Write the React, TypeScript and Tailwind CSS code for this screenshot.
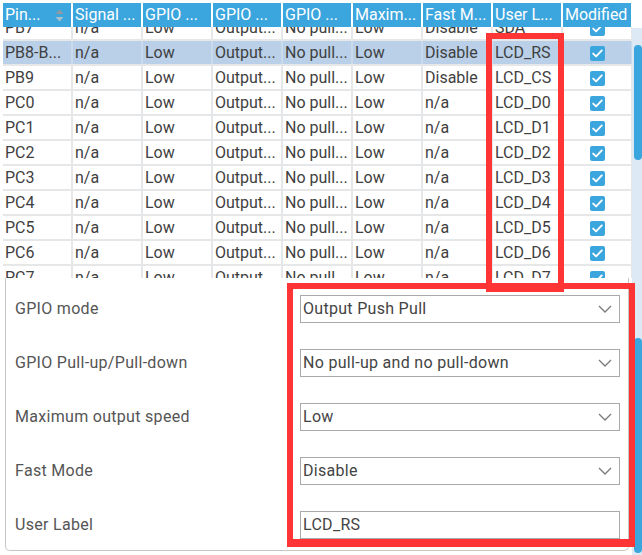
import React from "react";

type Row = {
  pin: string;
  fast: string;
  label: string;
  selected?: boolean;
};

const ROWS: Row[] = [
  { pin: "PB7", fast: "Disable", label: "SDA" },
  { pin: "PB8-B...", fast: "Disable", label: "LCD_RS", selected: true },
  { pin: "PB9", fast: "Disable", label: "LCD_CS" },
  { pin: "PC0", fast: "n/a", label: "LCD_D0" },
  { pin: "PC1", fast: "n/a", label: "LCD_D1" },
  { pin: "PC2", fast: "n/a", label: "LCD_D2" },
  { pin: "PC3", fast: "n/a", label: "LCD_D3" },
  { pin: "PC4", fast: "n/a", label: "LCD_D4" },
  { pin: "PC5", fast: "n/a", label: "LCD_D5" },
  { pin: "PC6", fast: "n/a", label: "LCD_D6" },
  { pin: "PC7", fast: "n/a", label: "LCD_D7" },
];

const HEADERS = [
  "Pin...",
  "Signal ...",
  "GPIO ...",
  "GPIO ...",
  "GPIO ...",
  "Maxim...",
  "Fast M...",
  "User L...",
  "Modified",
];

const FIELDS: { label: string; value: string; select: boolean }[] = [
  { label: "GPIO mode", value: "Output Push Pull", select: true },
  { label: "GPIO Pull-up/Pull-down", value: "No pull-up and no pull-down", select: true },
  { label: "Maximum output speed", value: "Low", select: true },
  { label: "Fast Mode", value: "Disable", select: true },
  { label: "User Label", value: "LCD_RS", select: false },
];

function SortIcon() {
  return (
    <svg width="9" height="13" viewBox="0 0 9 13" className="shrink-0">
      <path d="M4.5 0.5 L8.5 5 L0.5 5 Z" fill="#8f9ba1" />
      <path d="M0.5 8 L8.5 8 L4.5 12.5 Z" fill="#a9bfcb" />
    </svg>
  );
}

function Check() {
  return (
    <span className="flex h-[15px] w-[15px] items-center justify-center rounded-[2px] bg-[#3ba5de]">
      <svg width="11" height="9" viewBox="0 0 11 9">
        <path
          d="M1.2 4.6 L4.1 7.4 L9.8 1.4"
          fill="none"
          stroke="#ffffff"
          strokeWidth="1.9"
          strokeLinecap="round"
          strokeLinejoin="round"
        />
      </svg>
    </span>
  );
}

function Chevron() {
  return (
    <svg width="14" height="8" viewBox="0 0 14 8">
      <path d="M1 1 L7 7 L13 1" fill="none" stroke="#7a7a7a" strokeWidth="1.3" />
    </svg>
  );
}

function Cell({ children, center }: { children: React.ReactNode; center?: boolean }) {
  return (
    <div
      className={
        "flex h-[23px] items-center overflow-hidden whitespace-nowrap px-[2px] pt-[1px] text-[16px] text-[#3f3f3f] " +
        (center ? "justify-center" : "")
      }
    >
      {children}
    </div>
  );
}

export default function App() {
  return (
    <div className="relative h-[555px] w-[642px] overflow-hidden bg-white font-['Roboto',sans-serif]">
      {/* pin table */}
      <div className="flex h-[278px]">
        <div className="flex w-[632px] flex-col overflow-hidden pl-[3px] pt-[3px]">
          <div className="grid h-[24px] shrink-0 grid-cols-[repeat(9,68px)] gap-x-[2px]">
            {HEADERS.map((h, i) => (
              <div
                key={i}
                className="flex items-center justify-between overflow-hidden bg-[#3ba5de] px-[2px] text-[16px] whitespace-nowrap text-white"
              >
                <span>{h}</span>
                {i === 0 ? (
                  <span className="mr-[5px]">
                    <SortIcon />
                  </span>
                ) : null}
              </div>
            ))}
          </div>
          <div className="flex-1 overflow-hidden">
            <div className="-mt-[11px] flex flex-col gap-y-[2px] bg-[#e6e7e8]">
              {ROWS.map((r) => (
                <div
                  key={r.pin}
                  className={
                    "grid grid-cols-[repeat(9,68px)] gap-x-[2px] " +
                    (r.selected ? "bg-[#cbdbec] [&>div]:bg-[#b9d0e8]" : "[&>div]:bg-white")
                  }
                >
                  <Cell>{r.pin}</Cell>
                  <Cell>n/a</Cell>
                  <Cell>Low</Cell>
                  <Cell>Output...</Cell>
                  <Cell>No pull...</Cell>
                  <Cell>Low</Cell>
                  <Cell>{r.fast}</Cell>
                  <Cell>{r.label}</Cell>
                  <Cell center>
                    <Check />
                  </Cell>
                </div>
              ))}
            </div>
          </div>
        </div>
        <div className="w-[10px] pt-[28px]">
          <div className="h-full bg-[#dde9f5] pl-[2px] pt-[17px]">
            <div className="h-[115px] w-[8px] rounded-full bg-[#3ba5de]" />
          </div>
        </div>
      </div>

      {/* configuration panel */}
      <div className="flex h-[277px]">
        <div className="w-[632px]">
          <div className="ml-[5px] flex h-[273px] w-[624px] flex-col gap-[26px] rounded-b-[5px] border-x border-b border-[#c6c6c6] pl-[9px] pr-[8px] pt-[17px]">
            {FIELDS.map((f) => (
              <div key={f.label} className="flex h-[28px] items-center justify-between">
                <span className="text-[16px] tracking-[0.3px] text-[#555555]">{f.label}</span>
                <div className="flex h-[28px] w-[320px] items-center justify-between border border-[#a9a9a9] pl-[2px] pr-[7px] text-[16px] tracking-[0.3px] text-[#444444]">
                  <span>{f.value}</span>
                  {f.select ? <Chevron /> : null}
                </div>
              </div>
            ))}
          </div>
        </div>
        <div className="w-[10px] bg-[#dde9f5] pl-[2px] pt-[60px]">
          <div className="h-[215px] w-[8px] rounded-full bg-[#3ba5de]" />
        </div>
      </div>

      {/* red annotation boxes */}
      <div className="pointer-events-none absolute left-[486px] top-[33px] h-[259px] w-[78px] border-[6px] border-[#ff3434]" />
      <div className="pointer-events-none absolute left-[287px] top-[283px] h-[264px] w-[348px] border-[6px] border-b-[8px] border-[#ff3434]" />
    </div>
  );
}
